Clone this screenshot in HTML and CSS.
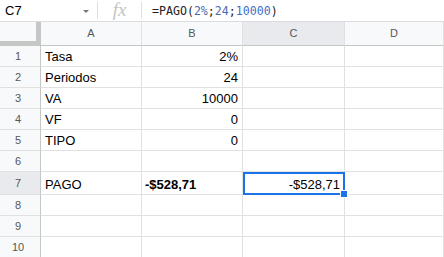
FILE: index.html
```html
<!DOCTYPE html>
<html>
<head>
<meta charset="utf-8">
<link rel="stylesheet" href="styles.css">
</head>
<body>
<div class="fbar">
  <div class="namebox"><span class="ref">C7</span><span class="caret"></span></div>
  <div class="fx">fx</div>
  <div class="formula">=PAGO(<span class="n1">2%</span>;<span class="n1">24</span>;<span class="n2">10000</span>)</div>
</div>
<div class="grid">
  <div class="corner"></div>
  <div class="ch">A</div><div class="ch">B</div><div class="ch sel">C</div><div class="ch">D</div>

  <div class="rh">1</div><div class="c">Tasa</div><div class="c r">2%</div><div class="c"></div><div class="c"></div>
  <div class="rh">2</div><div class="c">Periodos</div><div class="c r">24</div><div class="c"></div><div class="c"></div>
  <div class="rh">3</div><div class="c">VA</div><div class="c r">10000</div><div class="c"></div><div class="c"></div>
  <div class="rh">4</div><div class="c">VF</div><div class="c r">0</div><div class="c"></div><div class="c"></div>
  <div class="rh">5</div><div class="c">TIPO</div><div class="c r">0</div><div class="c"></div><div class="c"></div>
  <div class="rh">6</div><div class="c"></div><div class="c"></div><div class="c"></div><div class="c"></div>
  <div class="rh sel tall">7</div><div class="c tall bot">PAGO</div><div class="c tall bot b">-$528,71</div><div class="c tall bot r active">-$528,71<span class="handle"></span></div><div class="c tall"></div>
  <div class="rh">8</div><div class="c"></div><div class="c"></div><div class="c"></div><div class="c"></div>
  <div class="rh">9</div><div class="c"></div><div class="c"></div><div class="c"></div><div class="c"></div>
  <div class="rh">10</div><div class="c"></div><div class="c"></div><div class="c"></div><div class="c"></div>
</div>
</body>
</html>
```

FILE: styles.css
```css
html, body {
  margin: 0;
  padding: 0;
  background: #fff;
  overflow: hidden;
}
body {
  width: 444px;
  height: 257px;
  font-family: "Liberation Sans", Arial, sans-serif;
}
.fbar {
  display: flex;
  height: 22px;
  box-sizing: border-box;
  border-bottom: 1px solid #dadce0;
  align-items: stretch;
}
.namebox {
  width: 98px;
  box-sizing: border-box;
  border-right: 1px solid #e0e0e0;
  display: flex;
  align-items: center;
  justify-content: space-between;
  padding: 0 8px 0 5px;
  margin: 2px 0;
}
.ref {
  font-size: 13px;
  color: #000;
}
.caret {
  width: 0;
  height: 0;
  border-left: 3.5px solid transparent;
  border-right: 3.5px solid transparent;
  border-top: 3.5px solid #777;
  margin-top: 2px;
}
.fx {
  width: 44px;
  box-sizing: border-box;
  border-right: 1px solid #e0e0e0;
  margin: 2px 0;
  font-family: "Liberation Serif", serif;
  font-style: italic;
  font-size: 19px;
  color: #c4c4c4;
  display: flex;
  align-items: center;
  justify-content: center;
  padding-bottom: 2px;
}
.formula {
  padding-left: 10px;
  font-family: "DejaVu Sans Mono", monospace;
  font-size: 11.6px;
  color: #222;
  display: flex;
  align-items: center;
}
.n1 { color: #4e6bb0; }
.n2 { color: #3f6ec8; }
.grid {
  display: grid;
  grid-template-columns: 41px 101px 101px 102px 99px;
  grid-template-rows: 24px repeat(6, 21px) 23px repeat(3, 21px);
  font-size: 13px;
}
.corner {
  background: #f8f9fa;
  border-right: 5px solid #c4c7c5;
  border-bottom: 5px solid #c4c7c5;
  box-sizing: border-box;
}
.ch {
  background: #f8f9fa;
  border-right: 1px solid #e1e1e1;
  border-bottom: 1px solid #c4c7c5;
  box-sizing: border-box;
  display: flex;
  align-items: center;
  justify-content: center;
  font-size: 11px;
  color: #575757;
  padding-bottom: 1px;
}
.ch.sel { background: #e8eaed; }
.rh {
  background: #f8f9fa;
  border-right: 1px solid #c4c7c5;
  border-bottom: 1px solid #e1e1e1;
  box-sizing: border-box;
  display: flex;
  align-items: center;
  justify-content: center;
  padding-right: 4px;
  font-size: 11px;
  color: #575757;
}
.rh.sel { background: #e8eaed; }
.c {
  border-right: 1px solid #e1e1e1;
  border-bottom: 1px solid #e1e1e1;
  box-sizing: border-box;
  display: flex;
  align-items: center;
  padding: 0 4px 0 4px;
  color: #000;
  white-space: nowrap;
  position: relative;
}
.c.r { justify-content: flex-end; }
.c.bot { align-items: flex-end; padding-bottom: 2px; }
.c.b { font-weight: bold; padding-left: 3px; }
.active {
  outline: 2px solid #1a73e8;
  outline-offset: -2px;
  z-index: 1;
}
.handle {
  position: absolute;
  right: -3px;
  bottom: -3px;
  width: 6px;
  height: 6px;
  background: #1a73e8;
  border: 1px solid #fff;
  box-sizing: content-box;
  margin: -1px;
}
```
